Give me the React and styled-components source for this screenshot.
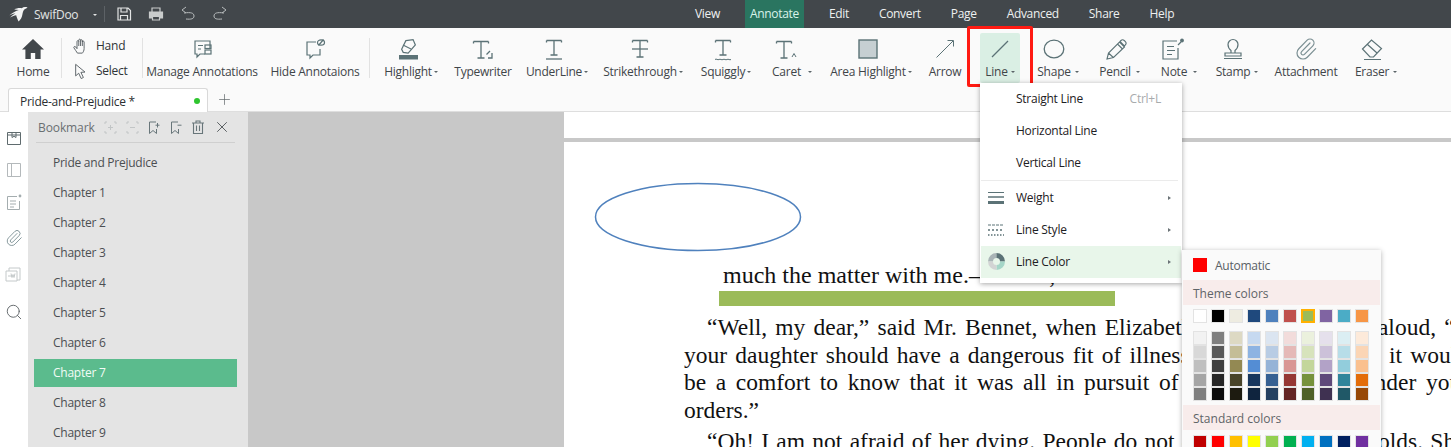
import React from 'react';
import styled, { createGlobalStyle } from 'styled-components';
import { Paperclip, Search, X, Plus } from 'lucide-react';

const Global = createGlobalStyle`
  html, body { margin: 0; padding: 0; overflow: hidden; background: #fff; }
  * { box-sizing: border-box; }
`;

const Shell = styled.div`
  position: relative;
  width: 1451px;
  height: 447px;
  overflow: hidden;
  display: flex;
  flex-direction: column;
  font-family: 'Open Sans', sans-serif;
  font-size: 12px;
  letter-spacing: -0.25px;
  color: #3f4549;
`;

/* title bar */
const TitleBar = styled.header`
  flex: none;
  height: 28px;
  display: flex;
  background: #42474b;
  color: #eef0f0;
  letter-spacing: -0.32px;
`;
const QuickBar = styled.div`
  width: 680px;
  display: flex;
  align-items: center;
  padding-left: 9px;
`;
const AppName = styled.span`
  margin-left: 6px;
  width: 57px;
  color: #e3e5e5;
  letter-spacing: -0.25px;
`;
const QuickSep = styled.i`
  width: 1px;
  height: 16px;
  margin: 0 3px 0 7px;
  background: #5d6266;
`;
const QuickIcon = styled.span`
  width: 32px;
  display: flex;
  justify-content: center;
`;
const MenuItem = styled.div`
  height: 28px;
  line-height: 28px;
  padding: 0 ${(p) => (p.$active ? '5px' : '15px')};
  margin: 0 ${(p) => (p.$active ? '10px' : '0')};
  background: ${(p) => (p.$active ? '#2a7560' : 'transparent')};
  color: ${(p) => (p.$active ? '#d9f3ea' : '#eef0f0')};
`;
const DownCaret = styled.i`
  display: inline-block;
  flex: none;
  width: 0;
  height: 0;
  margin-left: ${(p) => p.$gap ?? 2}px;
  margin-top: 1px;
  border-left: 2.5px solid transparent;
  border-right: 2.5px solid transparent;
  border-top: 2.5px solid ${(p) => p.$color ?? '#5b6468'};
`;

/* ribbon */
const Ribbon = styled.div`
  flex: none;
  height: 56px;
  display: flex;
  align-items: flex-start;
  padding: 5px 0 0 5px;
  background: #fafafa;
`;
const RibbonSep = styled.i`
  flex: none;
  width: 1px;
  height: 40px;
  margin-top: 5px;
  background: #e2e2e2;
`;
const Tool = styled.div`
  flex: none;
  width: ${(p) => p.$w}px;
  margin-left: ${(p) => p.$ml ?? 0}px;
  height: 50px;
  padding-top: 1px;
  display: flex;
  flex-direction: column;
  align-items: center;
  border-radius: 2px;
  background: ${(p) => (p.$active ? '#daefe4' : 'transparent')};
`;
const ToolIcon = styled.div`
  height: 29px;
  display: flex;
  align-items: center;
  justify-content: center;
  padding-right: ${(p) => p.$shift ?? 0}px;
`;
const ToolLabel = styled.div`
  display: flex;
  align-items: center;
  height: 16px;
  white-space: nowrap;
`;
const HandGroup = styled.div`
  flex: none;
  width: 80px;
  padding: 0 0 0 11px;
`;
const HandRow = styled.div`
  height: 25px;
  display: flex;
  align-items: center;
  gap: 7px;
  color: #2f3437;
`;
const HandIcon = styled.span`
  width: 16px;
  display: flex;
  justify-content: center;
`;

/* tabs */
const TabRow = styled.div`
  flex: none;
  height: 28px;
  display: flex;
  align-items: flex-end;
  padding-left: 8px;
  background: #fafafa;
  border-bottom: 1px solid #dedede;
`;
const Tab = styled.div`
  width: 200px;
  height: 24px;
  margin-bottom: -1px;
  display: flex;
  align-items: center;
  justify-content: space-between;
  padding: 1px 7px 0 11px;
  background: #fff;
  border: 1px solid #d9d9d9;
  border-bottom: 0;
  border-radius: 3px 3px 0 0;
  color: #2b2f32;
`;
const TabDot = styled.i`
  width: 6px;
  height: 6px;
  border-radius: 50%;
  background: #2fc52f;
`;
const AddTab = styled.span`
  margin: 0 0 3px 8px;
  display: flex;
  color: #5f6669;
`;

/* workspace */
const Workspace = styled.main`
  flex: 1;
  min-height: 0;
  display: flex;
`;
const Rail = styled.nav`
  flex: none;
  width: 28px;
  padding-top: 17px;
  background: #fff;
  display: flex;
  flex-direction: column;
  align-items: center;
`;
const RailIcon = styled.span`
  height: 18px;
  margin-bottom: ${(p) => p.$after ?? 14}px;
  display: flex;
  align-items: center;
  justify-content: center;
`;
const Panel = styled.aside`
  flex: none;
  width: 220px;
  background: #e4e4e4;
  padding: 0 11px 0 6px;
`;
const PanelHead = styled.div`
  height: 31px;
  margin: 0 2px;
  display: flex;
  align-items: center;
  padding-left: 2px;
  border-bottom: 1px solid #cfcfcf;
  color: #6a6f72;
`;
const PanelTitle = styled.span`
  width: 65px;
  letter-spacing: -0.1px;
`;
const PanelIcon = styled.span`
  width: ${(p) => p.$w ?? 23}px;
  display: flex;
  justify-content: center;
`;
const Chapters = styled.ul`
  list-style: none;
  margin: 6px 0 0;
  padding: 0;
  display: flex;
  flex-direction: column;
  gap: 2px;
`;
const Chapter = styled.li`
  height: 28px;
  line-height: 28px;
  padding-left: 19px;
  background: ${(p) => (p.$active ? '#5bbb8d' : 'transparent')};
  color: ${(p) => (p.$active ? '#f2fbf6' : '#4b4e52')};
`;
const Gutter = styled.div`
  flex: none;
  width: 316px;
  background: #c8c8c8;
`;
const Page = styled.section`
  position: relative;
  flex: 1;
  min-width: 0;
  background: #fff;
  overflow: hidden;
`;
const PageGap = styled.div`
  height: 26px;
  border-bottom: 4px solid #c8c8c8;
  box-sizing: content-box;
`;
const Ellipse = styled.svg`
  position: absolute;
  left: 30px;
  top: 70px;
`;
const Letter = styled.div`
  width: 785px;
  margin-left: 120px;
  padding-top: 120px;
  font-family: 'Liberation Serif', serif;
  font-size: 23.5px;
  letter-spacing: 0;
  line-height: 27.6px;
  color: #111;
`;
const Signoff = styled.div`
  position: relative;
  margin-left: 39px;
  height: 52px;
  font-size: 24px;
  white-space: nowrap;
  &::after {
    content: '';
    position: absolute;
    left: -4px;
    top: 29px;
    width: 396px;
    height: 15px;
    background: #9bbb59;
  }
`;
const BodyLine = styled.div`
  text-align: justify;
  text-align-last: justify;
  padding-left: ${(p) => (p.$indent ? '23px' : '0')};
`;
const PlainLine = styled.div`
  white-space: nowrap;
  padding-left: ${(p) => (p.$indent ? '23px' : '0')};
  margin-top: ${(p) => p.$top ?? 0}px;
  word-spacing: ${(p) => p.$spread ?? 0}px;
`;

/* dropdown */
const Dropdown = styled.div`
  position: absolute;
  left: 980px;
  top: 83px;
  width: 202px;
  height: 200px;
  padding: 0 1px;
  background: #fff;
  box-shadow: 0 1px 5px rgba(0, 0, 0, 0.35);
  color: #1d2023;
`;
const DropItem = styled.div`
  height: 32px;
  display: flex;
  align-items: center;
  padding: 0 10px 1px 7px;
  background: ${(p) => (p.$active ? '#e8f6ea' : 'transparent')};
`;
const DropIcon = styled.span`
  width: 28px;
  display: flex;
`;
const Grow = styled.span`
  flex: 1;
`;
const Shortcut = styled.span`
  margin-right: 10px;
  color: #a8abad;
`;
const SideCaret = styled.i`
  width: 0;
  height: 0;
  border-top: 2.5px solid transparent;
  border-bottom: 2.5px solid transparent;
  border-left: 3px solid #6b7377;
`;
const DropSep = styled.div`
  height: 1px;
  margin: 1px 3px 1px 0;
  background: #ebebeb;
`;

/* colour picker */
const Picker = styled.div`
  position: absolute;
  left: 1182px;
  top: 250px;
  width: 199px;
  height: 210px;
  padding: 0 1px;
  background: #fafafa;
  box-shadow: 0 1px 5px rgba(0, 0, 0, 0.3);
`;
const AutoRow = styled.div`
  height: 30px;
  display: flex;
  align-items: center;
  gap: 8px;
  padding-left: 10px;
  color: #596065;
`;
const AutoSwatch = styled.i`
  width: 14px;
  height: 14px;
  background: #ff0000;
`;
const PickerHead = styled.div`
  height: 25px;
  line-height: 27px;
  padding-left: 10px;
  background: #f8eceb;
  color: #5f6468;
  letter-spacing: 0;
`;
const SwatchGrid = styled.div`
  display: grid;
  grid-template-columns: repeat(10, 14px);
  column-gap: 4px;
  padding-left: 10px;
  margin: ${(p) => p.$margin};
`;
const Swatch = styled.i`
  display: block;
  width: 14px;
  height: 14px;
  background: ${(p) => p.$c};
  border: ${(p) => (p.$picked ? '2px solid #ffb000' : '1px solid #e3e3e3')};
`;

/* the red box a writer drew on the screenshot */
const Callout = styled.div`
  position: absolute;
  left: 967px;
  top: 26px;
  width: 66px;
  height: 61px;
  border: 3px solid #ff1a12;
  border-radius: 2px;
`;

const C = '#5b7276';

const Svg = ({ s = 24, sw = 1.2, color = C, children, fill = 'none' }) => (
  <svg width={s} height={s} viewBox={`0 0 ${s} ${s}`} fill={fill} stroke={color} strokeWidth={sw}>
    {children}
  </svg>
);

const Swift = () => (
  <svg width="19" height="16" viewBox="0 0 19 16" fill="#f2f3f3">
    <path d="M18.500 1.500C16 .6 14.200 1 12.800 2.200 10 1.800 7.600 2.200 5.200 3.600l4.600.4C7 5 3.600 6.600.4 9.200c2.200-.9 4.200-1.600 6-2-1.600 1.200-3.400 2.400-5.400 4.200 2.400-1 4.400-1.800 6.200-2.200.4 2 1.400 4 2.400 6.400 2-2 3.400-4.400 3.800-7.200.3-2.200.9-3.800 2.200-5.200l2.400-1.200z" />
  </svg>
);

const HomeIcon = () => (
  <svg width="24" height="22" viewBox="0 0 24 22" fill="#42474b">
    <path d="M12 1 1 11.500h3.400V21h5.400v-6h4.400v6h5.400v-9.500H23z" />
  </svg>
);

const TGlyph = ({ x = 12, top = 3, bottom = 20 }) => (
  <>
    <path d={`M${x - 7.5} ${top + 0.5}H${x + 7.5}M${x} ${top}V${bottom}M${x - 3.5} ${bottom}H${x + 3.5}`} />
    <path d={`M${x - 7.5} ${top + 0.5}v2M${x + 7.5} ${top + 0.5}v2`} />
  </>
);

const icons = {
  manage: (
    <Svg s={26}>
      <path d="M16 18H11l-3 3v-3H6V5h15v7M9 9.500h5M9 13h3" />
      <rect x="16" y="9" width="6" height="3.500" fill="none" />
      <rect x="16" y="14" width="6" height="4" fill="none" />
    </Svg>
  ),
  hide: (
    <Svg s={26}>
      <path d="M14 6H5v13h3v3l3-3h7v-6" />
      <ellipse cx="19" cy="6.500" rx="3.500" ry="2.600" />
      <path d="M16.500 9.500 21.500 3.500" />
    </Svg>
  ),
  highlight: (
    <Svg>
      <path d="M9 4 16 2l3 5-6 9H8L6 13z" transform="rotate(8 12 10)" />
      <path d="m7 8 8 4" />
      <rect x="3" y="18" width="19" height="4.500" fill={C} stroke="none" />
    </Svg>
  ),
  typewriter: (
    <Svg sw={1.3}>
      <TGlyph x={10} top={4} bottom={21} />
      <path d="M21 16v5h-4M19 14l-3.500 3.500" />
    </Svg>
  ),
  underline: (
    <Svg sw={1.3}>
      <TGlyph top={3} bottom={18} />
      <path d="M4 22h16" />
    </Svg>
  ),
  strike: (
    <Svg sw={1.3}>
      <TGlyph top={3} bottom={20} />
      <path d="M4 12h16" />
    </Svg>
  ),
  squiggly: (
    <Svg sw={1.3}>
      <TGlyph top={3} bottom={18} />
      <path d="M4 22.500c1.300-1.300 2.700 1 4 0s2.700 1 4 0 2.700 1 4 0 2.700 1 4 0" strokeWidth="1" />
    </Svg>
  ),
  caret: (
    <Svg sw={1.3}>
      <TGlyph x={10} top={4} bottom={21} />
      <path d="m18 20 2-3.500 2 3.500" strokeWidth="1" />
    </Svg>
  ),
  area: (
    <svg width="20" height="20" viewBox="0 0 20 20">
      <rect x="1" y="1" width="18" height="18" fill="#c6cfd2" stroke={C} strokeWidth="1.400" />
    </svg>
  ),
  arrow: (
    <Svg s={20}>
      <path d="M1.500 18.500 18 2M12.500 1.500H18.500V7.500" strokeWidth="1" />
    </Svg>
  ),
  line: (
    <Svg>
      <path d="M4 20 20 4" strokeWidth="1.300" />
    </Svg>
  ),
  shape: (
    <Svg>
      <ellipse cx="12" cy="12" rx="9.800" ry="8.800" strokeWidth="1.300" />
    </Svg>
  ),
  pencil: (
    <Svg>
      <path d="M3 22l1.500-6L15.500 5l5 5L9.500 20.500zM13.500 7l5 5M17 3.500c1-1 2.200-1 3.200 0l1.200 1.200c1 1 1 2.200 0 3.200l-1 1-4.400-4.400zM4.500 16l4.800 4.500" strokeWidth="1.100" />
    </Svg>
  ),
  note: (
    <Svg>
      <path d="M16 4H2v18h15V11M6 9.500h7M6 13.500h8M6 17.500h5" strokeWidth="1.200" />
      <path d="M17 8l3-3" />
      <circle cx="21" cy="3.500" r="1.900" fill={C} stroke="none" />
    </Svg>
  ),
  stamp: (
    <Svg>
      <path d="M10 13.500c-1-.8-3-3-3-6a5 5 0 0 1 10 0c0 3-2 5.200-3 6v2.500H10zM4 16h16v3H4zM3 21.500h18" strokeWidth="1.200" />
    </Svg>
  ),
  attach: <Paperclip size={24} strokeWidth={1.2} color="#7b8f93" />,
  eraser: (
    <Svg>
      <path d="m2.500 12 9-9 10 8.500-8 8.500h-3.500zM7.500 7.500l9.500 8.500M4 22.500h17" strokeWidth="1.200" />
    </Svg>
  ),
  hand: (
    <Svg s={18} sw={1} color="#50585c">
      <path d="M5 17c-1-2-3-4-4-6-.6-1.200 1-2 2-1l1.500 2V4c0-1.400 2-1.400 2 0V2.400c0-1.500 2-1.500 2 0V3c0-1.400 2-1.400 2 0v1.500c0-1.400 2-1.400 2 0V12c0 2-1 4-2 5z" />
      <path d="M6.500 4v5M8.500 3v6M10.500 3v6" />
    </Svg>
  ),
  select: (
    <Svg s={18} sw={1} color="#50585c">
      <path d="M3 1.500v13l3.400-3 2.800 6 2.500-1.200-2.800-5.800 4.600-.3z" />
    </Svg>
  ),
};

const tools = [
  { label: 'Highlight', icon: 'highlight', w: 82, caret: 2, shift: 6 },
  { label: 'Typewriter', icon: 'typewriter', w: 62 },
  { label: 'UnderLine', icon: 'underline', w: 86, caret: 2, shift: 7 },
  { label: 'Strikethrough', icon: 'strike', w: 86, caret: 2, shift: 7 },
  { label: 'Squiggly', icon: 'squiggly', w: 80, caret: 2, shift: 7 },
  { label: 'Caret', icon: 'caret', w: 52, caret: 7, shift: 12 },
  { label: 'Area Highlight', icon: 'area', w: 106, caret: 2, shift: 7 },
  { label: 'Arrow', icon: 'arrow', w: 42 },
  { label: 'Line', icon: 'line', w: 40, caret: 3, active: true, ml: 14 },
  { label: 'Shape', icon: 'shape', w: 76, caret: 4, shift: 9 },
  { label: 'Pencil', icon: 'pencil', w: 47, caret: 5, shift: 7 },
  { label: 'Note', icon: 'note', w: 72, caret: 6, shift: 12 },
  { label: 'Stamp', icon: 'stamp', w: 44, caret: 4, shift: 8 },
  { label: 'Attachment', icon: 'attach', w: 94 },
  { label: 'Eraser', icon: 'eraser', w: 46, caret: 4, shift: 8 },
];

const menus = ['Edit', 'Convert', 'Page', 'Advanced', 'Share', 'Help'];
const chapters = ['Pride and Prejudice', 'Chapter 1', 'Chapter 2', 'Chapter 3', 'Chapter 4', 'Chapter 5', 'Chapter 6', 'Chapter 7', 'Chapter 8', 'Chapter 9'];

const theme = ['#ffffff', '#000000', '#eeece1', '#1f497d', '#4f81bd', '#c0504d', '#9bbb59', '#8064a2', '#4bacc6', '#f79646'];
const shades = [
  ['#f2f2f2', '#7f7f7f', '#ddd9c3', '#c6d9f0', '#dbe5f1', '#f2dcdb', '#ebf1dd', '#e5e0ec', '#dbeef3', '#fdeada'],
  ['#d8d8d8', '#595959', '#c4bd97', '#8db3e2', '#b8cce4', '#e5b9b7', '#d7e3bc', '#ccc1d9', '#b7dde8', '#fbd5b5'],
  ['#bfbfbf', '#3f3f3f', '#938953', '#548dd4', '#95b3d7', '#d99694', '#c3d69b', '#b2a2c7', '#92cddc', '#fac08f'],
  ['#a5a5a5', '#262626', '#494429', '#17365d', '#366092', '#953734', '#76923c', '#5f497a', '#31859b', '#e36c09'],
  ['#7f7f7f', '#0c0c0c', '#1d1b10', '#0f243e', '#244061', '#632423', '#4f6128', '#3f3151', '#205867', '#974806'],
].flat();
const standard = ['#c00000', '#ff0000', '#ffc000', '#ffff00', '#92d050', '#00b050', '#00b0f0', '#0070c0', '#002060', '#7030a0'];

const App = () => {
  return (
    <Shell>
      <Global />
      <TitleBar>
        <QuickBar>
          <Swift />
          <AppName>SwifDoo</AppName>
          <DownCaret $color="#e3e5e5" />
          <QuickSep />
          <QuickIcon>
            <Svg s={16} color="#e3e5e5" sw={1.2}>
              <path d="M2 2h10l2.500 2.500V14H2zM5 2v4h6V2M4.500 14V9.500h7V14" />
            </Svg>
          </QuickIcon>
          <QuickIcon>
            <Svg s={16} color="#c9cccc" sw={1.2}>
              <path d="M4 6V2h8v4" />
              <path d="M1.500 6h13v6H12V9.500H4V12H1.500z" fill="#c9cccc" />
              <path d="M4.500 10.500h7V14h-7z" />
            </Svg>
          </QuickIcon>
          <QuickIcon>
            <Svg s={16} color="#b8bcbd" sw={1}>
              <path d="M4 8c7-1 10 0 10 3s-3 3.500-8 3M6 2 2 5l4 3" transform="translate(0 -1)" />
            </Svg>
          </QuickIcon>
          <QuickIcon>
            <Svg s={16} color="#b8bcbd" sw={1}>
              <path d="M12 8c-7-1-10 0-10 3s3 3.500 8 3M10 2l4 3-4 3" transform="translate(0 -1)" />
            </Svg>
          </QuickIcon>
        </QuickBar>
        <MenuItem>View</MenuItem>
        <MenuItem $active>Annotate</MenuItem>
        {menus.map((m) => (
          <MenuItem key={m}>{m}</MenuItem>
        ))}
      </TitleBar>

      <Ribbon>
        <Tool $w={56}>
          <ToolIcon><HomeIcon /></ToolIcon>
          <ToolLabel>Home</ToolLabel>
        </Tool>
        <RibbonSep />
        <HandGroup>
          <HandRow><HandIcon>{icons.hand}</HandIcon>Hand</HandRow>
          <HandRow><HandIcon>{icons.select}</HandIcon>Select</HandRow>
        </HandGroup>
        <RibbonSep />
        <Tool $w={118}>
          <ToolIcon>{icons.manage}</ToolIcon>
          <ToolLabel>Manage Annotations</ToolLabel>
        </Tool>
        <Tool $w={108}>
          <ToolIcon>{icons.hide}</ToolIcon>
          <ToolLabel>Hide Annotaions</ToolLabel>
        </Tool>
        <RibbonSep />
        {tools.map((t) => (
          <Tool key={t.label} $w={t.w} $active={t.active} $ml={t.ml}>
            <ToolIcon $shift={t.shift}>{icons[t.icon]}</ToolIcon>
            <ToolLabel>
              {t.label}
              {t.caret && <DownCaret $gap={t.caret} />}
            </ToolLabel>
          </Tool>
        ))}
      </Ribbon>

      <TabRow>
        <Tab>
          Pride-and-Prejudice *
          <TabDot />
        </Tab>
        <AddTab><Plus size={17} strokeWidth={1} /></AddTab>
      </TabRow>

      <Workspace>
        <Rail>
          <RailIcon>
            <Svg s={16} sw={1} color="#5f6b6e">
              <path d="M1.500 2.500h13v12h-13zM1.500 5h13M6 2.500v5l2-1.200 2 1.200v-5" />
            </Svg>
          </RailIcon>
          <RailIcon>
            <Svg s={16} sw={1} color="#b4b9bb">
              <path d="M1.500 1.500h13v13h-13zM5.500 1.500v13" />
            </Svg>
          </RailIcon>
          <RailIcon $after={18}>
            <Svg s={16} sw={1} color="#a4adaf">
              <path d="M11 2.500H1.500v13h12V7M4 7h6M4 10h6M4 13h4" />
              <circle cx="14" cy="2" r="1.400" fill="#a4adaf" stroke="none" />
            </Svg>
          </RailIcon>
          <RailIcon $after={19}>
            <Paperclip size={18} strokeWidth={1.200} color="#7b8f93" />
          </RailIcon>
          <RailIcon $after={19}>
            <Svg s={18} sw={1} color="#c4c9ca">
              <path d="M4 5V2h11v12h-3M1 5h11v10H1zM3 10h4" />
              <path d="m6 7.500 1 4 1-3 1 3 1-4" />
            </Svg>
          </RailIcon>
          <RailIcon>
            <Search size={18} strokeWidth={1.200} color="#5a6063" />
          </RailIcon>
        </Rail>

        <Panel>
          <PanelHead>
            <PanelTitle>Bookmark</PanelTitle>
            <PanelIcon>
              <Svg s={13} sw={1} color="#c2c5c6">
                <path d="M1 3V1h2M10 1h2v2M12 10v2h-2M3 12H1v-2M6.500 4v5M4 6.500h5" />
              </Svg>
            </PanelIcon>
            <PanelIcon>
              <Svg s={13} sw={1} color="#c2c5c6">
                <path d="M1 3V1h2M10 1h2v2M12 10v2h-2M3 12H1v-2M4 6.500h5" />
              </Svg>
            </PanelIcon>
            <PanelIcon>
              <Svg s={13} sw={1} color="#68767a">
                <path d="M8 1H1.500v11.500L5 9.500l3.500 3V8M9.500 2v4.500M7.500 4.200h4" />
              </Svg>
            </PanelIcon>
            <PanelIcon $w={22}>
              <Svg s={13} sw={1} color="#68767a">
                <path d="M8 1H1.500v11.500L5 9.500l3.500 3V8M7.500 4.200h4" />
              </Svg>
            </PanelIcon>
            <PanelIcon $w={24}>
              <Svg s={14} sw={1.100} color="#68767a">
                <path d="M1 3h12M5 3V1h4v2M2.500 3v10.500h9V3M5.500 5.500v5.500M8.500 5.500v5.500" />
              </Svg>
            </PanelIcon>
            <PanelIcon $w={27}>
              <X size={18} strokeWidth={1.100} color="#3f4549" />
            </PanelIcon>
          </PanelHead>
          <Chapters>
            {chapters.map((c) => (
              <Chapter key={c} $active={c === 'Chapter 7'}>{c}</Chapter>
            ))}
          </Chapters>
        </Panel>

        <Gutter />

        <Page>
          <PageGap />
          <Ellipse width="208" height="70" viewBox="0 0 208 70">
            <ellipse cx="104" cy="35" rx="102.500" ry="33.500" fill="none" stroke="#4f81bd" strokeWidth="1.500" />
          </Ellipse>
          <Letter>
            <Signoff>much the matter with me.—Yours, etc.</Signoff>
            <BodyLine $indent>“Well, my dear,” said Mr. Bennet, when Elizabeth had read the note aloud, “if</BodyLine>
            <BodyLine>your daughter should have a dangerous fit of illness—if she should die, it would</BodyLine>
            <BodyLine>be a comfort to know that it was all in pursuit of Mr. Bingley, and under your</BodyLine>
            <PlainLine>orders.”</PlainLine>
            <PlainLine $indent $top={4} $spread={1.4}>“Oh! I am not afraid of her dying. People do not die of little trifling colds. She</PlainLine>
          </Letter>
        </Page>
      </Workspace>

      <Callout />

      <Dropdown>
        <DropItem><DropIcon /><Grow>Straight Line</Grow><Shortcut>Ctrl+L</Shortcut></DropItem>
        <DropItem><DropIcon />Horizontal Line</DropItem>
        <DropItem><DropIcon />Vertical Line</DropItem>
        <DropSep />
        <DropItem>
          <DropIcon>
            <Svg s={16} color="#5b7276" sw={1}>
              <path d="M0 2.500h16" />
              <path d="M0 7h16" strokeWidth="1.500" />
              <path d="M0 12.500h16" strokeWidth="3" />
            </Svg>
          </DropIcon>
          <Grow>Weight</Grow><SideCaret />
        </DropItem>
        <DropItem>
          <DropIcon>
            <Svg s={16} color="#5b7276" sw={1}>
              <path d="M0 3h16" strokeDasharray="3 1" />
              <path d="M0 8h16" strokeDasharray="2 2" strokeWidth="1.400" />
              <path d="M0 13h16" strokeDasharray="1.500 1.500" strokeWidth="1.400" />
            </Svg>
          </DropIcon>
          <Grow>Line Style</Grow><SideCaret />
        </DropItem>
        <DropItem $active>
          <DropIcon>
            <svg width="17" height="17" viewBox="0 0 17 17">
              <path d="M8.500 0A8.500 8.500 0 0 0 0 8.500h5A3.500 3.500 0 0 1 8.500 5z" fill="#a9b4b6" />
              <path d="M8.500 0a8.500 8.500 0 0 1 8.500 8.500h-5a3.500 3.500 0 0 0-3.500-3.500z" fill="#5b7276" />
              <path d="M17 8.500A8.500 8.500 0 0 1 8.500 17v-5a3.500 3.500 0 0 0 3.500-3.500z" fill="#a5d6c8" />
              <path d="M8.500 17A8.500 8.500 0 0 1 0 8.500h5A3.500 3.500 0 0 0 8.500 12z" fill="#d2d4d4" />
            </svg>
          </DropIcon>
          <Grow>Line Color</Grow><SideCaret />
        </DropItem>
      </Dropdown>

      <Picker>
        <AutoRow><AutoSwatch />Automatic</AutoRow>
        <PickerHead>Theme colors</PickerHead>
        <SwatchGrid $margin="4px 0 8px">
          {theme.map((c) => (
            <Swatch key={c} $c={c} $picked={c === '#9bbb59'} />
          ))}
        </SwatchGrid>
        <SwatchGrid $margin="0 0 4px">
          {shades.map((c, i) => (
            <Swatch key={i} $c={c} />
          ))}
        </SwatchGrid>
        <PickerHead>Standard colors</PickerHead>
        <SwatchGrid $margin="5px 0 0">
          {standard.map((c) => (
            <Swatch key={c} $c={c} />
          ))}
        </SwatchGrid>
      </Picker>
    </Shell>
  );
};

export default App;
